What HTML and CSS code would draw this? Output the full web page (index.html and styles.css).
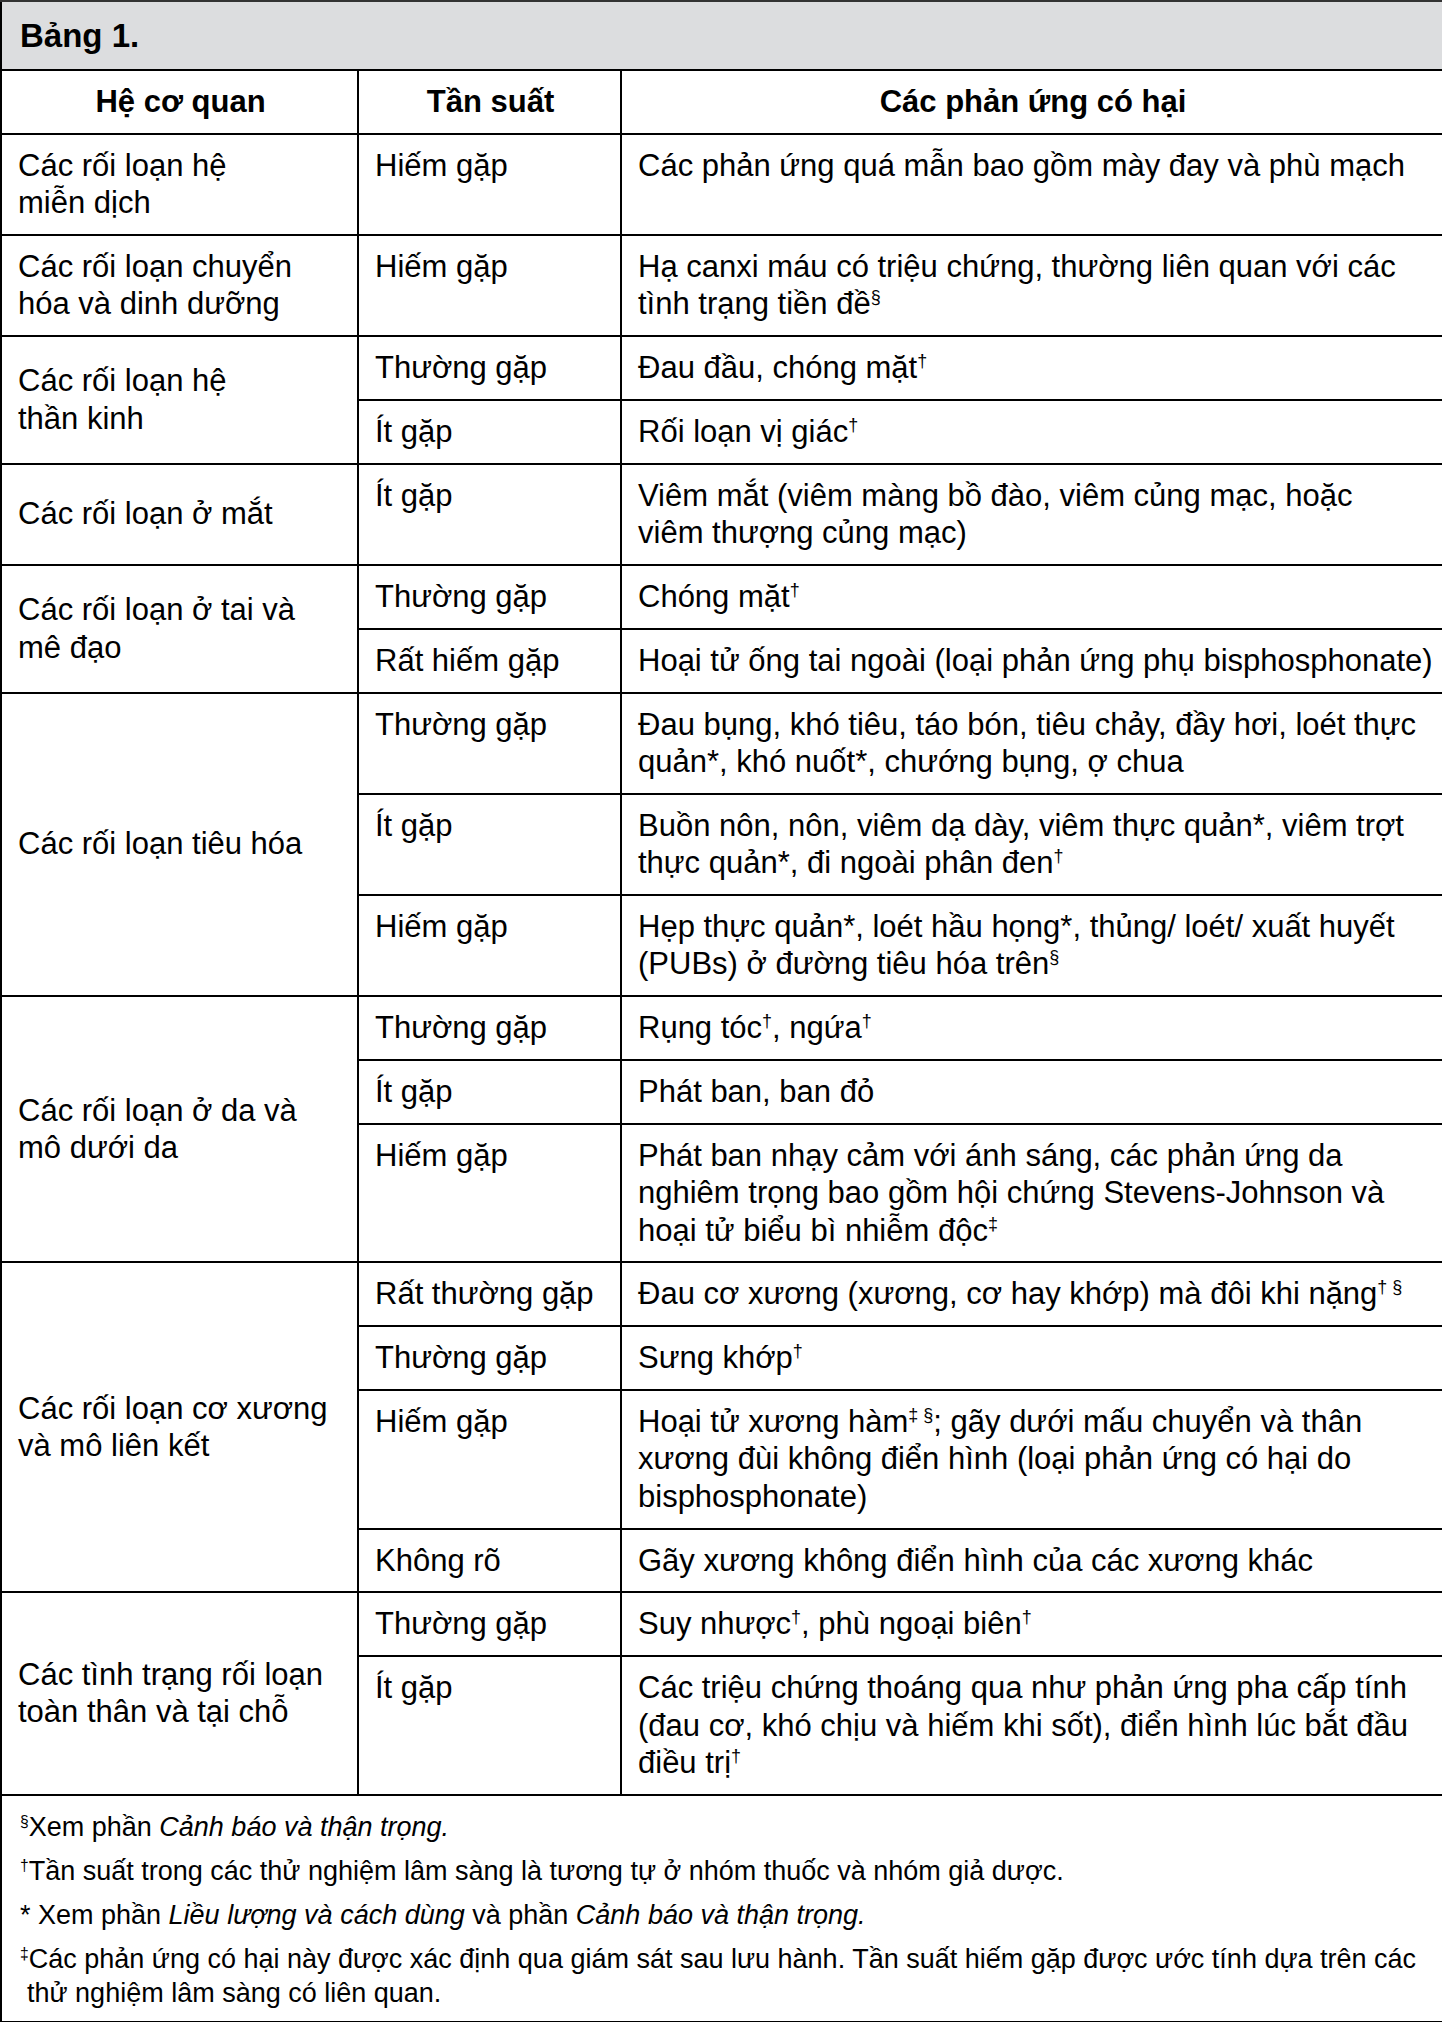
FILE: index.html
```html
<!DOCTYPE html>
<html lang="vi">
<head>
<meta charset="utf-8">
<title>Bảng 1.</title>
<link rel="stylesheet" href="styles.css">
</head>
<body>
<table class="adr">
  <colgroup>
    <col class="c-organ">
    <col class="c-freq">
    <col class="c-effect">
  </colgroup>
  <thead>
    <tr><th class="caption" colspan="3">Bảng 1.</th></tr>
    <tr class="head">
      <th>Hệ cơ quan</th>
      <th>Tần suất</th>
      <th>Các phản ứng có hại</th>
    </tr>
  </thead>
  <tbody>
    <tr>
      <td class="organ">Các rối loạn hệ<br>miễn dịch</td>
      <td>Hiếm gặp</td>
      <td>Các phản ứng quá mẫn bao gồm mày đay và phù mạch</td>
    </tr>
    <tr>
      <td class="organ">Các rối loạn chuyển<br>hóa và dinh dưỡng</td>
      <td>Hiếm gặp</td>
      <td>Hạ canxi máu có triệu chứng, thường liên quan với các<br>tình trạng tiền đề<sup>§</sup></td>
    </tr>
    <tr>
      <td class="organ" rowspan="2">Các rối loạn hệ<br>thần kinh</td>
      <td>Thường gặp</td>
      <td>Đau đầu, chóng mặt<sup>†</sup></td>
    </tr>
    <tr>
      <td>Ít gặp</td>
      <td>Rối loạn vị giác<sup>†</sup></td>
    </tr>
    <tr>
      <td class="organ">Các rối loạn ở mắt</td>
      <td>Ít gặp</td>
      <td>Viêm mắt (viêm màng bồ đào, viêm củng mạc, hoặc<br>viêm thượng củng mạc)</td>
    </tr>
    <tr>
      <td class="organ" rowspan="2">Các rối loạn ở tai và<br>mê đạo</td>
      <td>Thường gặp</td>
      <td>Chóng mặt<sup>†</sup></td>
    </tr>
    <tr>
      <td>Rất hiếm gặp</td>
      <td>Hoại tử ống tai ngoài (loại phản ứng phụ bisphosphonate)</td>
    </tr>
    <tr>
      <td class="organ" rowspan="3">Các rối loạn tiêu hóa</td>
      <td>Thường gặp</td>
      <td>Đau bụng, khó tiêu, táo bón, tiêu chảy, đầy hơi, loét thực<br>quản*, khó nuốt*, chướng bụng, ợ chua</td>
    </tr>
    <tr>
      <td>Ít gặp</td>
      <td>Buồn nôn, nôn, viêm dạ dày, viêm thực quản*, viêm trợt<br>thực quản*, đi ngoài phân đen<sup>†</sup></td>
    </tr>
    <tr>
      <td>Hiếm gặp</td>
      <td>Hẹp thực quản*, loét hầu họng*, thủng/ loét/ xuất huyết<br>(PUBs) ở đường tiêu hóa trên<sup>§</sup></td>
    </tr>
    <tr>
      <td class="organ" rowspan="3">Các rối loạn ở da và<br>mô dưới da</td>
      <td>Thường gặp</td>
      <td>Rụng tóc<sup>†</sup>, ngứa<sup>†</sup></td>
    </tr>
    <tr>
      <td>Ít gặp</td>
      <td>Phát ban, ban đỏ</td>
    </tr>
    <tr>
      <td>Hiếm gặp</td>
      <td>Phát ban nhạy cảm với ánh sáng, các phản ứng da<br>nghiêm trọng bao gồm hội chứng Stevens-Johnson và<br>hoại tử biểu bì nhiễm độc<sup>‡</sup></td>
    </tr>
    <tr>
      <td class="organ" rowspan="4">Các rối loạn cơ xương<br>và mô liên kết</td>
      <td>Rất thường gặp</td>
      <td>Đau cơ xương (xương, cơ hay khớp) mà đôi khi nặng<sup>† §</sup></td>
    </tr>
    <tr>
      <td>Thường gặp</td>
      <td>Sưng khớp<sup>†</sup></td>
    </tr>
    <tr>
      <td>Hiếm gặp</td>
      <td>Hoại tử xương hàm<sup>‡ §</sup>; gãy dưới mấu chuyển và thân<br>xương đùi không điển hình (loại phản ứng có hại do<br>bisphosphonate)</td>
    </tr>
    <tr>
      <td>Không rõ</td>
      <td>Gãy xương không điển hình của các xương khác</td>
    </tr>
    <tr>
      <td class="organ" rowspan="2">Các tình trạng rối loạn<br>toàn thân và tại chỗ</td>
      <td>Thường gặp</td>
      <td>Suy nhược<sup>†</sup>, phù ngoại biên<sup>†</sup></td>
    </tr>
    <tr>
      <td>Ít gặp</td>
      <td>Các triệu chứng thoáng qua như phản ứng pha cấp tính<br>(đau cơ, khó chịu và hiếm khi sốt), điển hình lúc bắt đầu<br>điều trị<sup>†</sup></td>
    </tr>
  </tbody>
  <tfoot>
    <tr>
      <td class="notes" colspan="3">
        <p><sup>§</sup>Xem phần <i>Cảnh báo và thận trọng.</i></p>
        <p><sup>†</sup>Tần suất trong các thử nghiệm lâm sàng là tương tự ở nhóm thuốc và nhóm giả dược.</p>
        <p>* Xem phần <i>Liều lượng và cách dùng</i> và phần <i>Cảnh báo và thận trọng.</i></p>
        <p class="hang"><sup>‡</sup>Các phản ứng có hại này được xác định qua giám sát sau lưu hành. Tần suất hiếm gặp được ước tính dựa trên các<br>thử nghiệm lâm sàng có liên quan.</p>
      </td>
    </tr>
  </tfoot>
</table>
</body>
</html>
```
FILE: styles.css
```css
html, body {
  margin: 0;
  padding: 0;
  background: #ffffff;
}

body {
  font-family: "Liberation Sans", Arial, sans-serif;
  color: #000000;
}

.adr {
  width: 1442px;
  table-layout: fixed;
  border-collapse: collapse;
  border: 2px solid #111111;
  font-size: 31px;
  line-height: 37.4px;
}

.c-organ { width: 357px; }
.c-freq { width: 263px; }
.c-effect { width: 822px; }

.adr th,
.adr td {
  border: 2px solid #000000;
  padding: 12px 14px 12.4px 16px;
  vertical-align: top;
  text-align: left;
  font-weight: normal;
}

.adr tbody td:last-child {
  white-space: nowrap;
  padding-right: 2px;
}

.adr .caption {
  background: #dcdddf;
  font-weight: bold;
  font-size: 33px;
  padding: 15px 18px 14.5px 18px;
  border-top-color: #333333;
  border-bottom: 2px solid #000000;
}

.adr .head th {
  font-weight: bold;
  text-align: center;
}

.adr td.organ {
  vertical-align: middle;
}

.adr sup {
  font-size: 0.58em;
  line-height: 0;
  vertical-align: 0.6em;
}

.adr td.notes {
  font-size: 27px;
  line-height: 34px;
  padding: 14px 14px 11px 18px;
}

.notes p {
  margin: 0 0 10px 0;
}

.notes p:last-child {
  margin-bottom: 0;
}

.notes .hang {
  padding-left: 7px;
  text-indent: -7px;
}
```
